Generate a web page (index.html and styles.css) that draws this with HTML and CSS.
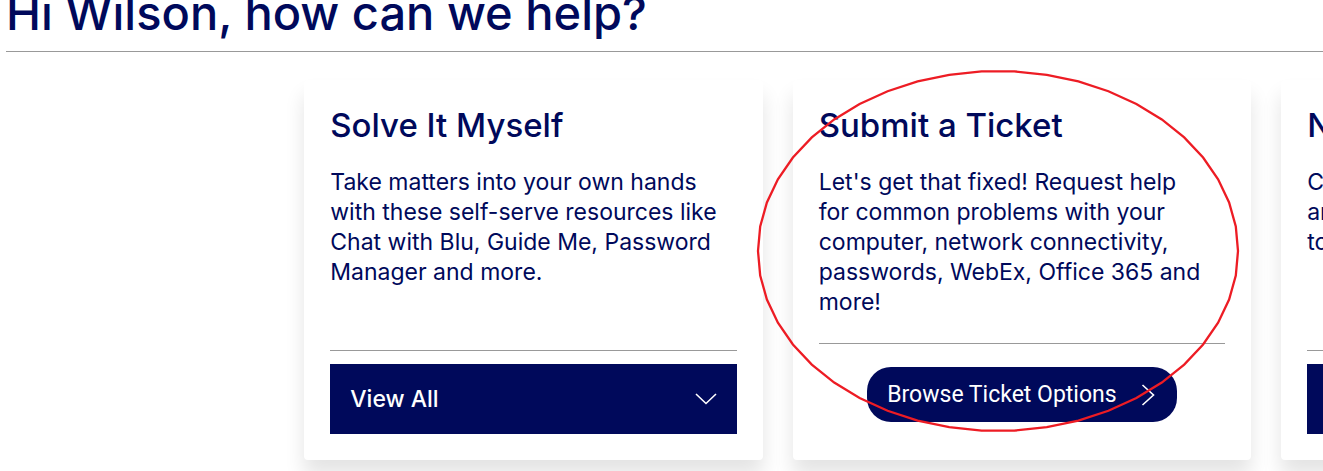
FILE: index.html
```html
<!DOCTYPE html>
<html lang="en">
<head>
<meta charset="utf-8">
<title>Help</title>
<link rel="stylesheet" href="styles.css">
</head>
<body>
<header class="greeting">
  <h1 class="greeting-title">Hi Wilson, how can we help?</h1>
</header>
<main class="cards">
  <section class="card">
    <h2 class="card-title">Solve It Myself</h2>
    <p class="card-text">Take matters into your own hands<br>with these self-serve resources like<br>Chat with Blu, Guide Me, Password<br>Manager and more.</p>
    <div class="card-actions">
      <button class="expand" type="button">View All
        <svg class="icon-down" viewBox="0 0 22 12" aria-hidden="true"><path d="M1 1L11 10.500L21 1"/></svg>
      </button>
    </div>
  </section>
  <section class="card">
    <h2 class="card-title">Submit a Ticket</h2>
    <p class="card-text">Let's get that fixed! Request help<br>for common problems with your<br>computer, network connectivity,<br>passwords, WebEx, Office 365 and<br>more!</p>
    <div class="card-actions card-actions-link">
      <a class="pill" href="#">Browse Ticket Options
        <svg class="icon-right" viewBox="0 0 14 22" aria-hidden="true"><path d="M1.500 1L12.500 11L1.500 21"/></svg>
      </a>
    </div>
    <svg class="circle-mark" viewBox="-242 -182 484 364" aria-hidden="true">
      <polygon points="-240,0 -237.800,-24.500 -231.100,-48.600 -220.100,-71.700 -205.100,-93.500 -186.200,-113.600 -163.800,-131.600 -138.400,-147.100 -110.400,-159.800 -80.400,-169.600 -48.800,-176.200 -16.400,-179.600 16.400,-179.600 48.800,-176.200 80.400,-169.600 110.400,-159.800 138.400,-147.100 163.800,-131.600 186.200,-113.600 205.100,-93.500 220.100,-71.700 231.100,-48.600 237.800,-24.500 240,0 237.800,24.500 231.100,48.600 220.100,71.700 205.100,93.500 186.200,113.600 163.800,131.600 138.400,147.100 110.400,159.800 80.400,169.600 48.800,176.200 16.400,179.600 -16.400,179.600 -48.800,176.200 -80.400,169.600 -110.400,159.800 -138.400,147.100 -163.800,131.600 -186.200,113.600 -205.100,93.500 -220.100,71.700 -231.100,48.600 -237.800,24.500"/>
    </svg>
  </section>
  <section class="card">
    <h2 class="card-title">N</h2>
    <p class="card-text">C<br>ar<br>to</p>
    <div class="card-actions">
      <button class="expand" type="button" aria-label="Expand"></button>
    </div>
  </section>
</main>
</body>
</html>
```

FILE: styles.css
```css
* { box-sizing: border-box; }
body {
  margin: 0;
  overflow: hidden;
  background: #fff;
  color: #00095b;
  font-family: Inter, "Open Sans", sans-serif;
}
.greeting {
  margin: -14px 0 0 6px;
  border-bottom: 1px solid #999;
}
.greeting-title {
  margin: 0;
  padding-bottom: 12px;
  font-size: 47px;
  font-weight: 500;
  line-height: 53px;
  white-space: nowrap;
}
.cards {
  display: grid;
  grid-auto-flow: column;
  grid-auto-columns: 45%;
  gap: 30px;
  margin: 28px 0 11px 23%;
}
.card {
  position: relative;
  display: flex;
  flex-direction: column;
  min-height: 380px;
  padding: 26px;
  border-radius: 4px;
  background: #fff;
  box-shadow: 0 15px 20px rgba(0, 0, 0, 0.11);
}
.card-title {
  margin: 0 0 23px;
  font-size: 33px;
  font-weight: 500;
  line-height: 38px;
}
.card-text {
  margin: 0 0 1px;
  font-size: 23px;
  line-height: 30px;
  white-space: nowrap;
}
.card-actions {
  margin-top: auto;
  padding-top: 13px;
  border-top: 1px solid #999;
}
.card-actions-link {
  display: flex;
  justify-content: center;
  padding: 23px 0 12px;
}
.expand {
  display: flex;
  align-items: center;
  justify-content: space-between;
  width: 100%;
  height: 70px;
  padding: 0 20px;
  border: 0;
  background: #00095b;
  color: #fff;
  font: 500 23px/30px Inter, "Open Sans", sans-serif;
}
.pill {
  display: flex;
  align-items: center;
  gap: 24px;
  padding: 12px 22px 12px 20px;
  border-radius: 24px;
  background: #00095b;
  color: #fff;
  font: 400 23px/31px Roboto, sans-serif;
  text-decoration: none;
  white-space: nowrap;
}
.icon-down,
.icon-right {
  fill: none;
  stroke: #fff;
  stroke-width: 1.6;
}
.icon-down { width: 22px; height: 12px; }
.icon-right { width: 14px; height: 22px; }
.circle-mark {
  position: absolute;
  top: -11px;
  left: -37px;
  width: 484px;
  height: 364px;
  fill: none;
  stroke: #ed1c24;
  stroke-width: 2.3;
  pointer-events: none;
}
```
